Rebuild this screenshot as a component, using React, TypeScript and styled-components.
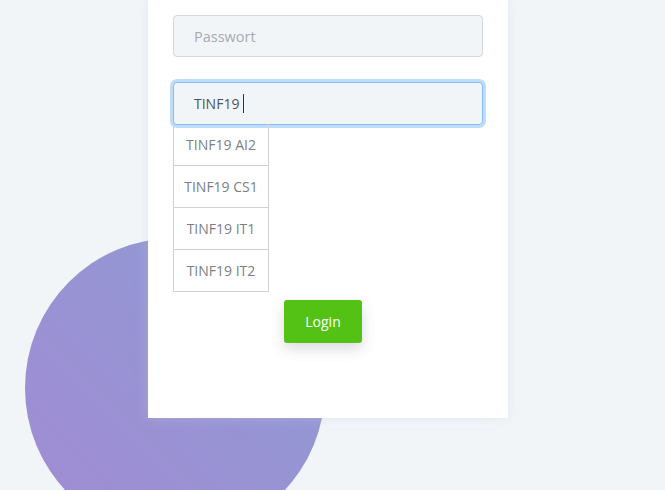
import React from "react";
import styled, { createGlobalStyle } from "styled-components";

const Global = createGlobalStyle`
  html, body { margin: 0; padding: 0; }
  body {
    background: #f2f5f8;
    font-family: "Open Sans", "Liberation Sans", sans-serif;
    width: 665px;
    height: 490px;
    overflow: hidden;
  }
`;

const Page = styled.div`
  position: relative;
  width: 665px;
  height: 490px;
  overflow: hidden;
  background: #f2f5f8;
`;

const Circle = styled.div`
  position: absolute;
  left: 25px;
  top: 238px;
  width: 300px;
  height: 300px;
  border-radius: 50%;
  background: linear-gradient(45deg, #a28bd3 0%, #8e9bd4 100%);
`;

const Card = styled.div`
  position: relative;
  margin-left: 148px;
  width: 360px;
  height: 418px;
  box-sizing: border-box;
  background: #ffffff;
  box-shadow: 0 0 12px rgba(200, 210, 225, 0.35);
  padding: 15px 25px 0 25px;
  display: flex;
  flex-direction: column;
`;

const Input = styled.div<{ $focused?: boolean }>`
  box-sizing: border-box;
  width: 310px;
  height: ${(p) => (p.$focused ? "43px" : "42px")};
  border-radius: 4px;
  background: #f2f5f8;
  border: 1px solid ${(p) => (p.$focused ? "#86bff7" : "#d3d7dc")};
  box-shadow: ${(p) => (p.$focused ? "0 0 0 3px #c0dcfb" : "none")};
  padding-left: 20px;
  display: flex;
  align-items: center;
  font-size: ${(p) => (p.$focused ? "14px" : "14.5px")};
  color: ${(p) => (p.$focused ? "#4c5360" : "#a7abb1")};
  margin-top: ${(p) => (p.$focused ? "25px" : "0")};
`;

const Caret = styled.span`
  display: inline-block;
  width: 1px;
  height: 19px;
  background: #333;
  margin-left: 4px;
`;

const List = styled.ul`
  list-style: none;
  margin: -1px 0 0 0;
  padding: 0;
  width: 96px;
  box-sizing: border-box;
  border: 1px solid #d2d2d2;
  border-top: none;
`;

const Item = styled.li`
  height: 42px;
  box-sizing: border-box;
  border-top: 1px solid #d2d2d2;
  display: flex;
  align-items: center;
  justify-content: center;
  font-size: 14px;
  color: #7b7f87;
  &:first-child { border-top: none; height: 41px; }
`;

const Button = styled.button`
  align-self: flex-start;
  margin: 8px 0 0 111px;
  width: 78px;
  height: 43px;
  border: none;
  border-radius: 3px;
  background: #54c214;
  color: #ffffff;
  font-family: "Open Sans", "Liberation Sans", sans-serif;
  font-size: 14px;
  box-shadow: 0 6px 14px rgba(80, 80, 110, 0.2);
  cursor: pointer;
`;

export default function App() {
  return (
    <Page>
      <Global />
      <Circle />
      <Card>
        <Input>Passwort</Input>
        <Input $focused>
          TINF19
          <Caret />
        </Input>
        <List>
          <Item>TINF19 AI2</Item>
          <Item>TINF19 CS1</Item>
          <Item>TINF19 IT1</Item>
          <Item>TINF19 IT2</Item>
        </List>
        <Button>Login</Button>
      </Card>
    </Page>
  );
}
